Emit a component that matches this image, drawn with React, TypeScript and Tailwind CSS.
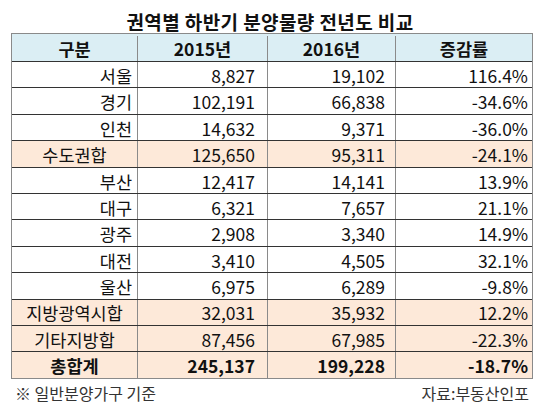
import React from "react";

type Row = { name: string; a: string; b: string; c: string; kind: "normal" | "sum" | "total" };

const rows: Row[] = [
  { name: "서울", a: "8,827", b: "19,102", c: "116.4%", kind: "normal" },
  { name: "경기", a: "102,191", b: "66,838", c: "-34.6%", kind: "normal" },
  { name: "인천", a: "14,632", b: "9,371", c: "-36.0%", kind: "normal" },
  { name: "수도권합", a: "125,650", b: "95,311", c: "-24.1%", kind: "sum" },
  { name: "부산", a: "12,417", b: "14,141", c: "13.9%", kind: "normal" },
  { name: "대구", a: "6,321", b: "7,657", c: "21.1%", kind: "normal" },
  { name: "광주", a: "2,908", b: "3,340", c: "14.9%", kind: "normal" },
  { name: "대전", a: "3,410", b: "4,505", c: "32.1%", kind: "normal" },
  { name: "울산", a: "6,975", b: "6,289", c: "-9.8%", kind: "normal" },
  { name: "지방광역시합", a: "32,031", b: "35,932", c: "12.2%", kind: "sum" },
  { name: "기타지방합", a: "87,456", b: "67,985", c: "-22.3%", kind: "sum" },
  { name: "총합계", a: "245,137", b: "199,228", c: "-18.7%", kind: "total" },
];

const font = { fontFamily: '"Noto Sans CJK KR", "Noto Sans", sans-serif' };

export default function App() {
  return (
    <div className="w-[540px] h-[408px] bg-white text-[#111] relative overflow-hidden" style={font}>
      <div className="h-[33px] flex items-center justify-center pt-[9px]">
        <span className="text-[19px] font-bold leading-none tracking-[0.4px]">권역별 하반기 분양물량 전년도 비교</span>
      </div>
      <div className="ml-[11px] w-[522px] border border-[#8a8a8a]">
        <div className="flex h-[27px] bg-[#dbeef4] text-[17.5px] font-bold leading-none pt-[2px]">
          <div className="w-[125px] flex items-center justify-center">구분</div>
          <div className="w-[130px] flex items-center justify-center border-l border-[#8a8a8a]">2015년</div>
          <div className="w-[128px] flex items-center justify-center border-l border-[#8a8a8a]">2016년</div>
          <div className="flex-1 flex items-center justify-center border-l border-[#8a8a8a]">증감률</div>
        </div>
        {rows.map((r) => {
          const bg = r.kind === "normal" ? "bg-white" : "bg-[#fde9d9]";
          const bold = r.kind === "total" ? "font-bold" : "font-normal";
          return (
            <div key={r.name} className={`flex h-[26.4px] border-t border-[#333] text-[17.5px] leading-none ${bg} ${bold}`}>
              <div
                className={`w-[125px] flex items-center pt-[2px] ${
                  r.kind === "normal" ? "justify-end pr-[5px]" : "justify-center"
                }`}
              >
                {r.name}
              </div>
              <div className="w-[130px] flex items-center justify-end pt-[2px] pr-[12px] border-l border-[#8a8a8a]">{r.a}</div>
              <div className="w-[128px] flex items-center justify-end pt-[2px] pr-[10px] border-l border-[#8a8a8a]">{r.b}</div>
              <div className="flex-1 flex items-center justify-end pt-[2px] pr-[4px] border-l border-[#8a8a8a]">{r.c}</div>
            </div>
          );
        })}
      </div>
      <div className="flex justify-between px-[15px] pr-[11px] mt-[6px] text-[16px] leading-none text-[#333]">
        <span>※ 일반분양가구 기준</span>
        <span>자료:부동산인포</span>
      </div>
    </div>
  );
}
